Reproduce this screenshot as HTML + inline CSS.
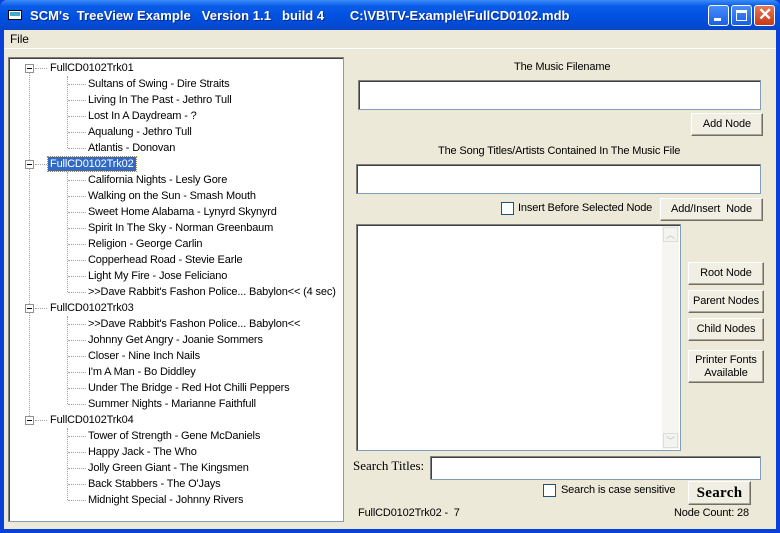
<!DOCTYPE html>
<html><head><meta charset="utf-8"><style>
*{margin:0;padding:0;box-sizing:border-box}
body{width:780px;height:533px;overflow:hidden;background:#0840d8;font-family:"Liberation Sans",sans-serif;font-size:11px;color:#000;position:relative}
.a{position:absolute}
#title{left:0;top:0;width:780px;height:30px;background:linear-gradient(#3a8cf8,#0a5ce8 20%,#0050e0 60%,#0846c8);border-radius:7px 7px 0 0}
#tt{left:30px;top:8px;color:#fff;font-weight:bold;font-size:13px;letter-spacing:0.05px;white-space:pre;text-shadow:1px 1px #0a2a8a}
.wb{top:5px;width:21px;height:21px;border:1px solid #fff;border-radius:3px;background:linear-gradient(#4a8cf8,#1860e8)}
#client{left:4px;top:30px;width:772px;height:499px;background:#ece9d8}
.box{background:#fff;border:1px solid #7f9db9;border-top-color:#808080;border-left-color:#808080;box-shadow:inset 1px 1px #404040}
.btn{background:#f1efe4;border:1px solid;border-color:#fff #716f64 #716f64 #fff;box-shadow:inset -1px -1px #aca899;text-align:center;font-size:11px;line-height:20px;letter-spacing:-0.1px}
.cb{width:13px;height:13px;background:#fff;border:1px solid #1c5180}
.t{position:absolute;font-size:11px;white-space:nowrap;line-height:14px;letter-spacing:-0.15px}
.dv{position:absolute;border-left:1px dotted #a0a0a0;width:0}
.dh{position:absolute;border-top:1px dotted #a0a0a0;height:0}
.mb{position:absolute;width:9px;height:9px;border:1px solid #919191;background:#fff}
.mb:after{content:"";position:absolute;left:1px;top:3px;width:5px;height:1px;background:#000}
</style></head><body>
<div id="title" class="a"></div>
<div class="a" style="left:8px;top:10px;width:14px;height:10px;background:#fff;border:1px solid #000"></div>
<div class="a" style="left:10px;top:12px;width:10px;height:4px;background:#4ac"></div>
<div id="tt" class="a">SCM's  TreeView Example   Version 1.1   build 4       C:\VB\TV-Example\FullCD0102.mdb</div>
<div class="a wb" style="left:708px"><div class="a" style="left:5px;top:12px;width:7px;height:3px;background:#fff"></div></div>
<div class="a wb" style="left:731px"><div class="a" style="left:4px;top:4px;width:11px;height:11px;border:1px solid #fff;border-top-width:3px"></div></div>
<div class="a wb" style="left:754px;background:linear-gradient(#e87858,#c83818)"><div class="a" style="left:3px;top:-1px;color:#fff;font-size:17px;font-weight:bold">✕</div></div>
<div id="client" class="a"></div>
<div class="a" style="left:4px;top:48px;width:772px;height:1px;background:#fff"></div>
<div class="t" style="left:10px;top:32px;font-size:12px">File</div>

<div class="a box" style="left:8px;top:57px;width:336px;height:465px"></div>
<div class="dv" style="left:29px;top:72px;height:344px"></div>
<div class="dv" style="left:67px;top:76px;height:72px"></div>
<div class="dv" style="left:67px;top:172px;height:120px"></div>
<div class="dv" style="left:67px;top:316px;height:88px"></div>
<div class="dv" style="left:67px;top:428px;height:72px"></div>
<div id="tree"></div>
<script>
var rows=[[0,"FullCD0102Trk01"],[1,"Sultans of Swing - Dire Straits"],[1,"Living In The Past - Jethro Tull"],[1,"Lost In A Daydream - ?"],[1,"Aqualung - Jethro Tull"],[1,"Atlantis - Donovan"],
[0,"FullCD0102Trk02"],[1,"California Nights - Lesly Gore"],[1,"Walking on the Sun - Smash Mouth"],[1,"Sweet Home Alabama - Lynyrd Skynyrd"],[1,"Spirit In The Sky - Norman Greenbaum"],[1,"Religion - George Carlin"],[1,"Copperhead Road - Stevie Earle"],[1,"Light My Fire - Jose Feliciano"],[1,">>Dave Rabbit's Fashon Police... Babylon<< (4 sec)"],
[0,"FullCD0102Trk03"],[1,">>Dave Rabbit's Fashon Police... Babylon<<"],[1,"Johnny Get Angry - Joanie Sommers"],[1,"Closer - Nine Inch Nails"],[1,"I'm A Man - Bo Diddley"],[1,"Under The Bridge - Red Hot Chilli Peppers"],[1,"Summer Nights - Marianne Faithfull"],
[0,"FullCD0102Trk04"],[1,"Tower of Strength - Gene McDaniels"],[1,"Happy Jack - The Who"],[1,"Jolly Green Giant - The Kingsmen"],[1,"Back Stabbers - The O'Jays"],[1,"Midnight Special - Johnny Rivers"]];
var h="";rows.forEach(function(r,i){var y=60+16*i;var c=y+8;
if(r[0]==0){h+='<div class="mb" style="left:25px;top:'+(c-4)+'px"></div><div class="dh" style="left:35px;top:'+c+'px;width:12px"></div>';
var sel=r[1]=="FullCD0102Trk02";h+='<div class="t" style="left:'+(sel?48:50)+'px;top:'+(y+1)+'px;'+(sel?'background:#316ac5;color:#fff;padding:0 2px;outline:1px dotted #c08040':'')+'">'+r[1]+'</div>';}
else{h+='<div class="dh" style="left:68px;top:'+c+'px;width:18px"></div><div class="t" style="left:88px;top:'+(y+1)+'px">'+r[1].replace(/</g,"&lt;").replace(/>/g,"&gt;")+'</div>';}});
document.getElementById("tree").innerHTML=h;
</script>

<div class="t" style="left:514px;top:60px">The Music Filename</div>
<div class="a box" style="left:358px;top:80px;width:403px;height:30px"></div>
<div class="a btn" style="left:691px;top:113px;width:72px;height:23px">Add Node</div>
<div class="t" style="left:438px;top:144px">The Song Titles/Artists Contained In The Music File</div>
<div class="a box" style="left:356px;top:164px;width:405px;height:30px"></div>
<div class="a cb" style="left:501px;top:202px"></div>
<div class="t" style="left:518px;top:201px">Insert Before Selected Node</div>
<div class="a btn" style="left:660px;top:198px;width:103px;height:23px">Add/Insert&nbsp; Node</div>
<div class="a box" style="left:356px;top:224px;width:325px;height:227px"></div>
<div class="a" style="left:662px;top:226px;width:17px;height:223px;background:#f6f5f0"></div>
<div class="a" style="left:663px;top:227px;width:15px;height:15px;border:1px solid #ddd;background:#f3f3ef;color:#bbb;font-size:9px;text-align:center">︿</div>
<div class="a" style="left:663px;top:433px;width:15px;height:15px;border:1px solid #ddd;background:#f3f3ef;color:#bbb;font-size:9px;text-align:center">﹀</div>
<div class="a btn" style="left:688px;top:262px;width:76px;height:23px">Root Node</div>
<div class="a btn" style="left:688px;top:290px;width:76px;height:23px">Parent Nodes</div>
<div class="a btn" style="left:688px;top:318px;width:76px;height:23px">Child Nodes</div>
<div class="a btn" style="left:688px;top:350px;width:76px;height:33px;line-height:13px;padding-top:3px">Printer Fonts<br>Available</div>
<div class="t" style="left:353px;top:459px;font-family:'Liberation Serif',serif;font-size:13px;letter-spacing:0">Search Titles:</div>
<div class="a box" style="left:430px;top:456px;width:331px;height:24px"></div>
<div class="a cb" style="left:543px;top:484px"></div>
<div class="t" style="left:561px;top:483px">Search is case sensitive</div>
<div class="a btn" style="left:688px;top:481px;width:63px;height:24px;font-family:'Liberation Serif',serif;font-weight:bold;font-size:15px;line-height:22px;letter-spacing:0.3px">Search</div>
<div class="t" style="left:358px;top:506px">FullCD0102Trk02 -&nbsp; 7</div>
<div class="t" style="left:674px;top:506px">Node Count: 28</div>
</body></html>
